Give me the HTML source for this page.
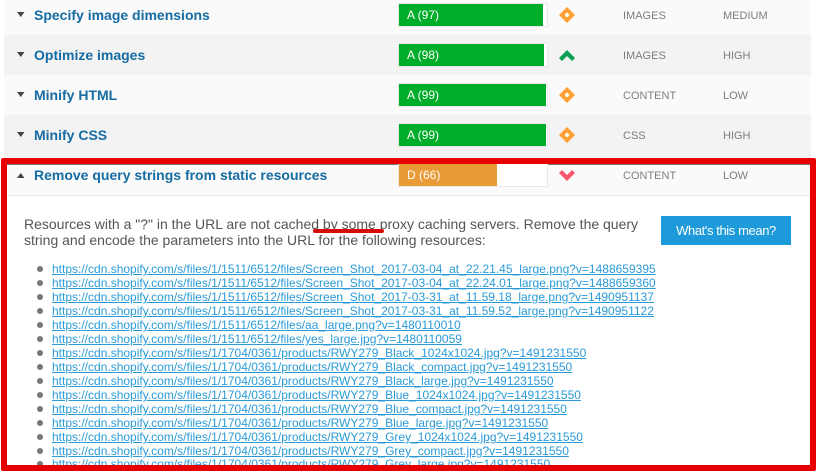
<!DOCTYPE html>
<html><head><meta charset="utf-8"><style>
html,body{margin:0;padding:0;background:#fff}
#p{position:relative;width:830px;height:471px;overflow:hidden;background:#fff;font-family:"Liberation Sans",sans-serif}
.a{position:absolute}
.row{position:absolute;left:4px;width:807px}
.t{position:absolute;left:34px;font-size:14px;font-weight:bold;color:#146ca3;line-height:16px;white-space:nowrap}
.o{position:absolute;left:398px;width:148px;height:22px;border:1px solid #e8e8e8;background:#fff}
.b{position:absolute;left:0;top:0;height:22px;color:#fff;font-size:12px;line-height:22px;text-indent:8px;white-space:nowrap}
.c{position:absolute;font-size:11px;color:#7d7d7d;line-height:14px;white-space:nowrap}
.tri{position:absolute;left:16.5px}
.l{position:absolute;left:52px;font-size:12px;line-height:14px;color:#2a9bd8;text-decoration:underline;white-space:nowrap}
.d{position:absolute;left:37px;width:6px;height:6px;border-radius:50%;background:#777}
</style></head><body><div id="p">
<div class="row" style="top:0;height:35px;background:#fafafa"></div>
<div class="row" style="top:35px;height:40px;background:#f3f3f3"></div>
<div class="row" style="top:75px;height:40px;background:#fafafa"></div>
<div class="row" style="top:115px;height:43px;background:#f3f3f3"></div>
<div class="row" style="top:164px;height:31px;background:#fafafa;border-bottom:1px solid #e8e8e8"></div>
<div class="a" style="left:4px;top:164px;width:807px;height:1px;background:#777"></div>

<svg class="tri" style="top:12px" width="8" height="5"><path d="M0 0H7.5L3.75 5Z" fill="#444"/></svg>
<svg class="tri" style="top:52px" width="8" height="5"><path d="M0 0H7.5L3.75 5Z" fill="#444"/></svg>
<svg class="tri" style="top:92px" width="8" height="5"><path d="M0 0H7.5L3.75 5Z" fill="#444"/></svg>
<svg class="tri" style="top:132px" width="8" height="5"><path d="M0 0H7.5L3.75 5Z" fill="#444"/></svg>
<svg class="tri" style="top:173px" width="8" height="5"><path d="M0 5H7.5L3.75 0Z" fill="#444"/></svg>

<div class="t" style="top:7px">Specify image dimensions</div>
<div class="t" style="top:47px">Optimize images</div>
<div class="t" style="top:87px">Minify HTML</div>
<div class="t" style="top:127px">Minify CSS</div>
<div class="t" style="top:167px">Remove query strings from static resources</div>

<div class="o" style="top:3px"><div class="b" style="width:144px;background:#00ad2b">A (97)</div></div>
<div class="o" style="top:43px"><div class="b" style="width:145px;background:#00ad2b">A (98)</div></div>
<div class="o" style="top:83px"><div class="b" style="width:147px;background:#00ad2b">A (99)</div></div>
<div class="o" style="top:123px"><div class="b" style="width:147px;background:#00ad2b">A (99)</div></div>
<div class="o" style="top:163px"><div class="b" style="width:98px;background:#e89b36">D (66)</div></div>

<svg class="a" style="left:559px;top:7px" width="16" height="16"><path d="M8 0L16 8L8 16L0 8Z" fill="#fd9f33"/><circle cx="8" cy="8" r="2" fill="#fff"/></svg>
<svg class="a" style="left:559px;top:87px" width="16" height="16"><path d="M8 0L16 8L8 16L0 8Z" fill="#fd9f33"/><circle cx="8" cy="8" r="2" fill="#fff"/></svg>
<svg class="a" style="left:559px;top:127px" width="16" height="16"><path d="M8 0L16 8L8 16L0 8Z" fill="#fd9f33"/><circle cx="8" cy="8" r="2" fill="#fff"/></svg>
<svg class="a" style="left:559px;top:50px" width="16" height="11"><path d="M8 0L16 8L13 11L8 6L3 11L0 8Z" fill="#0e9f56"/></svg>
<svg class="a" style="left:559px;top:170px" width="16" height="11"><path d="M8 11L16 3L13 0L8 5L3 0L0 3Z" fill="#f7566b"/></svg>

<div class="c" style="left:623px;top:9px">IMAGES</div><div class="c" style="left:723px;top:9px">MEDIUM</div>
<div class="c" style="left:623px;top:49px">IMAGES</div><div class="c" style="left:723px;top:49px">HIGH</div>
<div class="c" style="left:623px;top:89px">CONTENT</div><div class="c" style="left:723px;top:89px">LOW</div>
<div class="c" style="left:623px;top:129px">CSS</div><div class="c" style="left:723px;top:129px">HIGH</div>
<div class="c" style="left:623px;top:169px">CONTENT</div><div class="c" style="left:723px;top:169px">LOW</div>

<div class="a" style="left:24px;top:216px;width:625px;font-size:14px;line-height:16px;color:#555">Resources with a "?" in the URL are not cached by some proxy caching servers. Remove the query<br>string and encode the parameters into the URL for the following resources:</div>
<div class="a" style="left:661px;top:216px;width:130px;height:29px;background:#1d9ad9;color:#fff;font-size:13px;line-height:29px;text-align:center;letter-spacing:-.4px">What's this mean?</div>

<div class="d" style="top:266px"></div><a class="l" style="top:262px">https://cdn.shopify.com/s/files/1/1511/6512/files/Screen_Shot_2017-03-04_at_22.21.45_large.png?v=1488659395</a>
<div class="d" style="top:280px"></div><a class="l" style="top:276px">https://cdn.shopify.com/s/files/1/1511/6512/files/Screen_Shot_2017-03-04_at_22.24.01_large.png?v=1488659360</a>
<div class="d" style="top:294px"></div><a class="l" style="top:290px">https://cdn.shopify.com/s/files/1/1511/6512/files/Screen_Shot_2017-03-31_at_11.59.18_large.png?v=1490951137</a>
<div class="d" style="top:308px"></div><a class="l" style="top:304px">https://cdn.shopify.com/s/files/1/1511/6512/files/Screen_Shot_2017-03-31_at_11.59.52_large.png?v=1490951122</a>
<div class="d" style="top:322px"></div><a class="l" style="top:318px">https://cdn.shopify.com/s/files/1/1511/6512/files/aa_large.png?v=1480110010</a>
<div class="d" style="top:336px"></div><a class="l" style="top:332px">https://cdn.shopify.com/s/files/1/1511/6512/files/yes_large.jpg?v=1480110059</a>
<div class="d" style="top:350px"></div><a class="l" style="top:346px">https://cdn.shopify.com/s/files/1/1704/0361/products/RWY279_Black_1024x1024.jpg?v=1491231550</a>
<div class="d" style="top:364px"></div><a class="l" style="top:360px">https://cdn.shopify.com/s/files/1/1704/0361/products/RWY279_Black_compact.jpg?v=1491231550</a>
<div class="d" style="top:378px"></div><a class="l" style="top:374px">https://cdn.shopify.com/s/files/1/1704/0361/products/RWY279_Black_large.jpg?v=1491231550</a>
<div class="d" style="top:392px"></div><a class="l" style="top:388px">https://cdn.shopify.com/s/files/1/1704/0361/products/RWY279_Blue_1024x1024.jpg?v=1491231550</a>
<div class="d" style="top:406px"></div><a class="l" style="top:402px">https://cdn.shopify.com/s/files/1/1704/0361/products/RWY279_Blue_compact.jpg?v=1491231550</a>
<div class="d" style="top:420px"></div><a class="l" style="top:416px">https://cdn.shopify.com/s/files/1/1704/0361/products/RWY279_Blue_large.jpg?v=1491231550</a>
<div class="d" style="top:434px"></div><a class="l" style="top:430px">https://cdn.shopify.com/s/files/1/1704/0361/products/RWY279_Grey_1024x1024.jpg?v=1491231550</a>
<div class="d" style="top:448px"></div><a class="l" style="top:444px">https://cdn.shopify.com/s/files/1/1704/0361/products/RWY279_Grey_compact.jpg?v=1491231550</a>
<div class="d" style="top:461px"></div><a class="l" style="top:457px">https://cdn.shopify.com/s/files/1/1704/0361/products/RWY279_Grey_large.jpg?v=1491231550</a>

<div class="a" style="left:313px;top:229px;width:71px;height:4px;border-radius:2px;background:#d80a0a"></div>

<div class="a" style="left:1px;top:158px;width:803px;height:301px;border:6px solid #e60000;border-radius:2px"></div>
</div></body></html>
